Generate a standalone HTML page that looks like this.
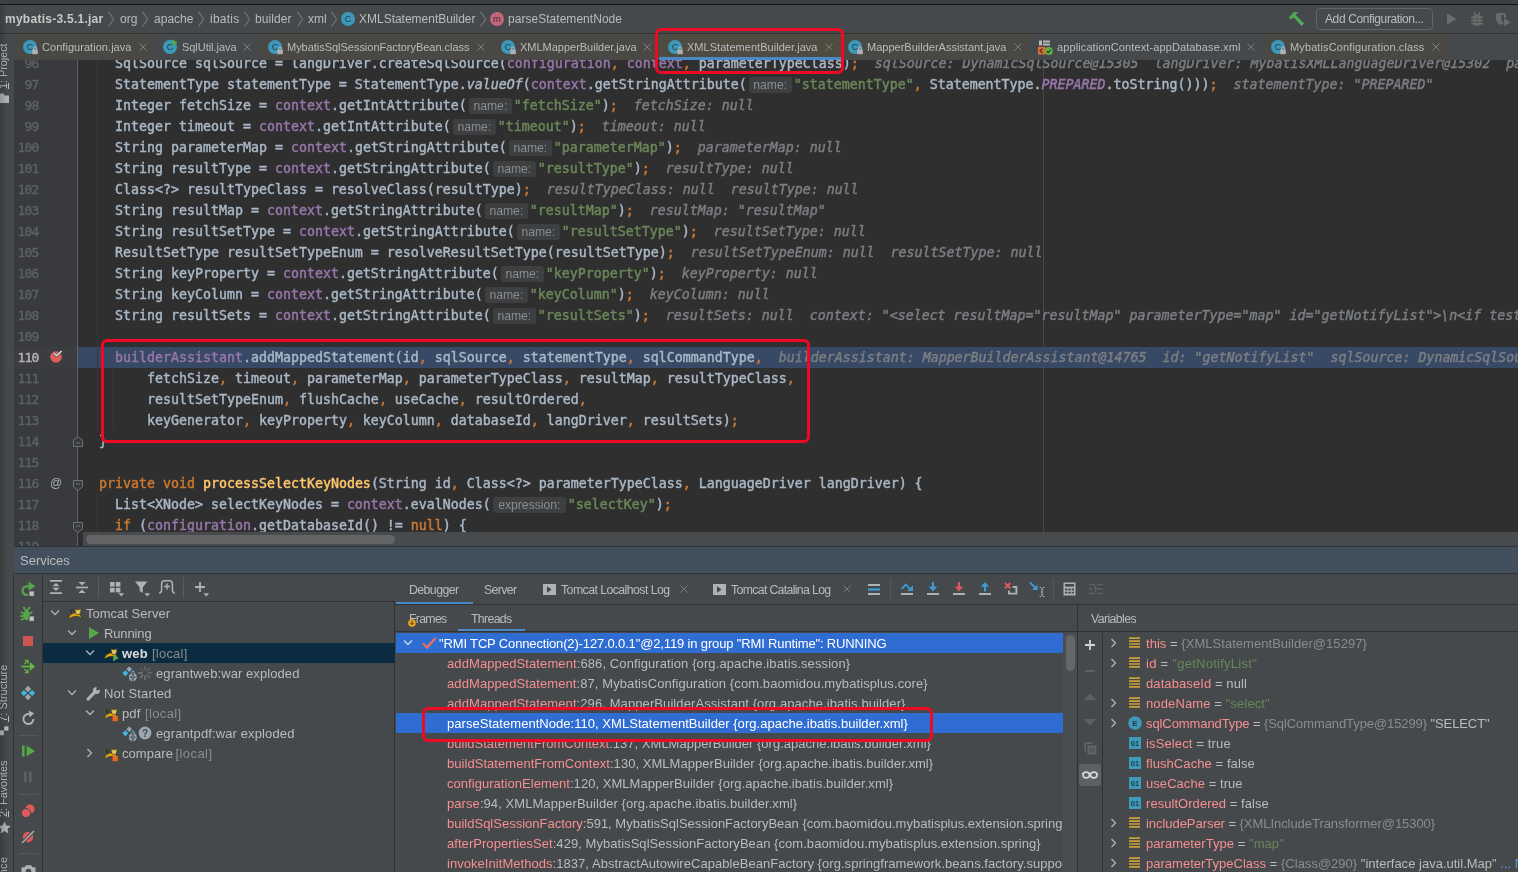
<!DOCTYPE html>
<html><head><meta charset="utf-8"><title>IDE</title>
<style>*{box-sizing:border-box;margin:0;padding:0}
html,body{width:1518px;height:872px;overflow:hidden;background:#45494b}
body{position:relative;will-change:transform;font-family:"Liberation Sans",sans-serif;font-size:12.5px;color:#bbbbbb}
.abs{position:absolute}
svg{position:absolute;overflow:visible}
#topstrip{left:0;top:0;width:1518px;height:5px;background:#3e3f40;border-bottom:1px solid #141414}
#nav{left:0;top:5px;width:1518px;height:29px;background:#45494b;border-bottom:1px solid #323232}
#nav span{position:absolute;top:0;line-height:29px;white-space:nowrap;font-size:12px;color:#bbbbbb}
#nav .btn{position:absolute;left:1316px;top:3px;width:117px;height:22px;border:1px solid #646464;border-radius:4px}
#tabs{left:14px;top:34px;width:1504px;height:26px;background:#45494b}
.tab{position:absolute;top:0;height:26px;line-height:27px;font-size:11px;white-space:nowrap;color:#bbbbbb}
.tab span{position:absolute;top:0}
.tab .x{color:#747474;font-size:15px;line-height:25px;font-family:"DejaVu Sans",sans-serif}
#lstrip{left:0;top:34px;width:14px;height:838px;background:#45494b}
.vt{position:absolute;left:-4px;white-space:nowrap;font-size:11px;color:#bbbbbb;transform-origin:0 0;transform:rotate(-90deg);line-height:14px;height:14px}
#editor{left:14px;top:60px;width:1504px;height:487px;background:#2f2f2f;overflow:hidden}
#gutter{left:14px;top:60px;width:64px;height:487px;background:#383a3e;border-right:1px solid #5f6163;overflow:hidden}
.num{position:absolute;left:0;width:24.7px;text-align:right;font-family:"DejaVu Sans Mono","Liberation Mono",monospace;font-size:13px;letter-spacing:-0.75px;-webkit-text-stroke:0.3px;line-height:21px;height:21px;color:#606366;white-space:pre}
.ln{position:absolute;left:69px;height:21px;line-height:21px;font-family:"DejaVu Sans Mono","Liberation Mono",monospace;font-size:13.29px;color:#a9b7c6;white-space:pre;-webkit-text-stroke:0.45px}
.k{color:#cc7832}.f{color:#9876aa}.s{color:#6a8759}.m{color:#ffc66d}.i{font-style:italic}
.d{color:#7b7e82;font-style:italic}
.h{display:inline-block;vertical-align:top;height:21px;position:relative}
.h b{position:absolute;left:2px;right:2px;top:3px;height:16px;-webkit-text-stroke:0;border-radius:3px;background:#3d3f41;color:#8a8d90;font:normal 12.2px/16px "Liberation Sans",sans-serif;text-align:center}
#hscroll{left:83px;top:532px;width:1435px;height:15px;background:#484b4d}
#hscroll i{position:absolute;left:3px;top:3px;width:309px;height:9px;border-radius:5px;background:#626465}
#svchead{left:14px;top:546px;width:1504px;height:28px;background:#42505e;border-top:1px solid #323232;border-bottom:1px solid #323232;line-height:27px;font-size:13px;color:#bbbbbb;padding-left:6px}
#svcleft{left:14px;top:574px;width:29px;height:298px;background:#45494b;border-right:1px solid #323232}
#svctb{left:43px;top:574px;width:352px;height:28px;border-bottom:1px solid #323232}
#tree{left:43px;top:602px;width:352px;height:270px;background:#45494b;border-right:1px solid #323232}
.tr{position:absolute;left:0;width:351px;height:20px;line-height:20px;font-size:13px;color:#bbbbbb;white-space:nowrap}
.tr span{position:absolute;top:0}
.g{color:#8c8c8c}
#dbg{left:395px;top:574px;width:1123px;height:298px;background:#45494b}
.dt{position:absolute;white-space:nowrap;font-size:12.3px;color:#bbbbbb;line-height:16px}
.row{position:absolute;left:0;height:20px;line-height:20px;font-size:13px;white-space:nowrap;color:#bbbbbb}
.row span{position:absolute;top:0}
.r{color:#ff6b68}
.fr{color:#f78f90}
.red{border:3px solid #ee0a24;border-radius:6px;position:absolute}

#edge{left:0;top:5px;width:7px;height:867px;background:linear-gradient(to right,rgba(0,0,0,.16),rgba(0,0,0,0))}
</style></head>
<body>
<div id="topstrip" class="abs"></div>
<div id="nav" class="abs">
<span style="left:5px;letter-spacing:0.261px;font-weight:bold;color:#c8c8c8;">mybatis-3.5.1.jar</span>
<span style="left:120px;letter-spacing:0.052px;">org</span>
<span style="left:154px;letter-spacing:0.021px;">apache</span>
<span style="left:210px;letter-spacing:0.247px;">ibatis</span>
<span style="left:255px;letter-spacing:0.067px;">builder</span>
<span style="left:308px;letter-spacing:-0.057px;">xml</span>
<span style="left:359px;letter-spacing:-0.012px;">XMLStatementBuilder</span>
<span style="left:508px;letter-spacing:0.033px;">parseStatementNode</span>
<span style="left:1325px;letter-spacing:-0.379px;">Add Configuration...</span>
<div class="btn"></div>
</div>
<svg style="left:107px;top:10px" width="8" height="18" viewBox="0 0 8 18"><path d="M1.4 1.6 L6.6 9.2 L1.4 16.8" fill="none" stroke="#74777a" stroke-width="1.1"/></svg>
<svg style="left:141px;top:10px" width="8" height="18" viewBox="0 0 8 18"><path d="M1.4 1.6 L6.6 9.2 L1.4 16.8" fill="none" stroke="#74777a" stroke-width="1.1"/></svg>
<svg style="left:197px;top:10px" width="8" height="18" viewBox="0 0 8 18"><path d="M1.4 1.6 L6.6 9.2 L1.4 16.8" fill="none" stroke="#74777a" stroke-width="1.1"/></svg>
<svg style="left:243px;top:10px" width="8" height="18" viewBox="0 0 8 18"><path d="M1.4 1.6 L6.6 9.2 L1.4 16.8" fill="none" stroke="#74777a" stroke-width="1.1"/></svg>
<svg style="left:296px;top:10px" width="8" height="18" viewBox="0 0 8 18"><path d="M1.4 1.6 L6.6 9.2 L1.4 16.8" fill="none" stroke="#74777a" stroke-width="1.1"/></svg>
<svg style="left:330px;top:10px" width="8" height="18" viewBox="0 0 8 18"><path d="M1.4 1.6 L6.6 9.2 L1.4 16.8" fill="none" stroke="#74777a" stroke-width="1.1"/></svg>
<svg style="left:479px;top:10px" width="8" height="18" viewBox="0 0 8 18"><path d="M1.4 1.6 L6.6 9.2 L1.4 16.8" fill="none" stroke="#74777a" stroke-width="1.1"/></svg>
<svg style="left:340px;top:11px" width="18" height="18" viewBox="0 0 18 18"><circle cx="8" cy="8" r="7" fill="#3e98b9"/><text x="7.9" y="11" text-anchor="middle" font-family="Liberation Sans,sans-serif" font-size="9" fill="#1f3944">C</text></svg>
<svg style="left:489px;top:11px" width="16" height="16" viewBox="0 0 16 16"><circle cx="8" cy="8" r="7" fill="#c4667a"/><text x="8" y="10.8" text-anchor="middle" font-family="Liberation Sans,sans-serif" font-size="9.5" fill="#3e2a30">m</text></svg>
<svg style="left:1288px;top:11px" width="18" height="17" viewBox="0 0 18 17"><path d="M0.8 6.4 L6.1 0.9 L10.3 1 L7.6 4 L16.1 12.6 L13.5 15 L5.6 6.2 L3.2 8.6 Z" fill="#50a85a"/></svg>
<svg style="left:1446px;top:12px" width="12" height="14" viewBox="0 0 12 14"><path d="M1 1.2 L10.6 7 L1 12.8 Z" fill="#6b6b6b"/></svg>
<svg style="left:1469px;top:11px" width="16" height="16" viewBox="0 0 16 16"><path d="M4.4 6 Q4.4 3.4 8 3.4 Q11.6 3.4 11.6 6 V11 Q11.6 15 8 15 Q4.4 15 4.4 11 Z" fill="#6b6b6b"/><path d="M2 6.2 H14 M2 9.5 H14 M2 12.8 H14" stroke="#6b6b6b" stroke-width="1.5"/><path d="M6.6 4.2 L4.8 1.2 M9.4 4.2 L11.2 1.2" stroke="#6b6b6b" stroke-width="1.4"/><path d="M6.4 7.9 H9.6 M6.4 11.2 H9.6" stroke="#45494b" stroke-width="1.2"/></svg>
<svg style="left:1495px;top:11px" width="18" height="17" viewBox="0 0 18 17"><path d="M1 2.8 L6 1.8 L11 2.8 V8 Q11 11.6 6 14 Q1 11.6 1 8 Z" fill="#6b6b6b"/><path d="M6.3 4 H9 V10.4 H6.3 Z" fill="#45494b"/><path d="M8.6 6.6 L16.2 11.4 L8.6 16.2 Z" fill="#6b6b6b" stroke="#45494b" stroke-width="0.9"/></svg>
<div id="tabs" class="abs">
<div class="tab" style="left:0px;width:141px;background:#4a4845"><span style="left:28px;letter-spacing:0.046px">Configuration.java</span></div>
<div class="tab" style="left:141px;width:104px;background:#45494b"><span style="left:27px;letter-spacing:-0.044px">SqlUtil.java</span></div>
<div class="tab" style="left:245px;width:234px;background:#4a4845"><span style="left:28px;letter-spacing:-0.027px">MybatisSqlSessionFactoryBean.class</span></div>
<div class="tab" style="left:479px;width:166px;background:#4a4845"><span style="left:27px;letter-spacing:-0.014px">XMLMapperBuilder.java</span></div>
<div class="tab" style="left:645px;width:182px;background:#4e4b41"><span style="left:28px;letter-spacing:0.036px">XMLStatementBuilder.java</span></div>
<div class="tab" style="left:827px;width:189px;background:#4a4845"><span style="left:26px;letter-spacing:0.003px">MapperBuilderAssistant.java</span></div>
<div class="tab" style="left:1016px;width:232px;background:#45494b"><span style="left:27px;letter-spacing:0.109px">applicationContext-appDatabase.xml</span></div>
<div class="tab" style="left:1248px;width:185px;background:#4a4845"><span style="left:28px;letter-spacing:0.117px">MybatisConfiguration.class</span></div>
<div class="abs" style="left:645px;top:23px;width:182px;height:3px;background:#4a88c7"></div>
</div>
<div class="abs" style="left:0;top:60px;width:1518px;height:0;border-top:0 solid #323232"></div>
<svg style="left:139px;top:43px" width="8" height="8" viewBox="0 0 8 8"><path d="M0.4 0.4 L7.6 7.6 M7.6 0.4 L0.4 7.6" stroke="#7a7d7f" stroke-width="1" fill="none"/></svg>
<svg style="left:243px;top:43px" width="8" height="8" viewBox="0 0 8 8"><path d="M0.4 0.4 L7.6 7.6 M7.6 0.4 L0.4 7.6" stroke="#7a7d7f" stroke-width="1" fill="none"/></svg>
<svg style="left:477px;top:43px" width="8" height="8" viewBox="0 0 8 8"><path d="M0.4 0.4 L7.6 7.6 M7.6 0.4 L0.4 7.6" stroke="#7a7d7f" stroke-width="1" fill="none"/></svg>
<svg style="left:643px;top:43px" width="8" height="8" viewBox="0 0 8 8"><path d="M0.4 0.4 L7.6 7.6 M7.6 0.4 L0.4 7.6" stroke="#7a7d7f" stroke-width="1" fill="none"/></svg>
<svg style="left:825px;top:43px" width="8" height="8" viewBox="0 0 8 8"><path d="M0.4 0.4 L7.6 7.6 M7.6 0.4 L0.4 7.6" stroke="#7a7d7f" stroke-width="1" fill="none"/></svg>
<svg style="left:1014px;top:43px" width="8" height="8" viewBox="0 0 8 8"><path d="M0.4 0.4 L7.6 7.6 M7.6 0.4 L0.4 7.6" stroke="#7a7d7f" stroke-width="1" fill="none"/></svg>
<svg style="left:1247px;top:43px" width="8" height="8" viewBox="0 0 8 8"><path d="M0.4 0.4 L7.6 7.6 M7.6 0.4 L0.4 7.6" stroke="#7a7d7f" stroke-width="1" fill="none"/></svg>
<svg style="left:1432px;top:43px" width="8" height="8" viewBox="0 0 8 8"><path d="M0.4 0.4 L7.6 7.6 M7.6 0.4 L0.4 7.6" stroke="#7a7d7f" stroke-width="1" fill="none"/></svg>
<svg style="left:22px;top:39px" width="18" height="18" viewBox="0 0 18 18"><circle cx="8" cy="8" r="7" fill="#3e98b9"/><text x="7.9" y="11" text-anchor="middle" font-family="Liberation Sans,sans-serif" font-size="9" fill="#1f3944">C</text><rect x="10.2" y="10.6" width="5.6" height="4.6" fill="#aeb0b2"/><path d="M11.4 10.8 V9.6 A1.6 1.6 0 0 1 14.6 9.6 V10.8" fill="none" stroke="#aeb0b2" stroke-width="1.1"/></svg>
<svg style="left:162px;top:39px" width="18" height="18" viewBox="0 0 18 18"><circle cx="8" cy="8" r="7" fill="#3e98b9"/><text x="7.9" y="11" text-anchor="middle" font-family="Liberation Sans,sans-serif" font-size="9" fill="#1f3944">C</text><path d="M10.2 0.2 L15.8 3.6 L10.2 7 Z" fill="#57a64a"/></svg>
<svg style="left:267px;top:39px" width="18" height="18" viewBox="0 0 18 18"><circle cx="8" cy="8" r="7" fill="#3e98b9"/><text x="7.9" y="11" text-anchor="middle" font-family="Liberation Sans,sans-serif" font-size="9" fill="#1f3944">C</text><rect x="10.2" y="10.6" width="5.6" height="4.6" fill="#aeb0b2"/><path d="M11.4 10.8 V9.6 A1.6 1.6 0 0 1 14.6 9.6 V10.8" fill="none" stroke="#aeb0b2" stroke-width="1.1"/></svg>
<svg style="left:500px;top:39px" width="18" height="18" viewBox="0 0 18 18"><circle cx="8" cy="8" r="7" fill="#3e98b9"/><text x="7.9" y="11" text-anchor="middle" font-family="Liberation Sans,sans-serif" font-size="9" fill="#1f3944">C</text><rect x="10.2" y="10.6" width="5.6" height="4.6" fill="#aeb0b2"/><path d="M11.4 10.8 V9.6 A1.6 1.6 0 0 1 14.6 9.6 V10.8" fill="none" stroke="#aeb0b2" stroke-width="1.1"/></svg>
<svg style="left:667px;top:39px" width="18" height="18" viewBox="0 0 18 18"><circle cx="8" cy="8" r="7" fill="#3e98b9"/><text x="7.9" y="11" text-anchor="middle" font-family="Liberation Sans,sans-serif" font-size="9" fill="#1f3944">C</text><rect x="10.2" y="10.6" width="5.6" height="4.6" fill="#aeb0b2"/><path d="M11.4 10.8 V9.6 A1.6 1.6 0 0 1 14.6 9.6 V10.8" fill="none" stroke="#aeb0b2" stroke-width="1.1"/></svg>
<svg style="left:847px;top:39px" width="18" height="18" viewBox="0 0 18 18"><circle cx="8" cy="8" r="7" fill="#3e98b9"/><text x="7.9" y="11" text-anchor="middle" font-family="Liberation Sans,sans-serif" font-size="9" fill="#1f3944">C</text><rect x="10.2" y="10.6" width="5.6" height="4.6" fill="#aeb0b2"/><path d="M11.4 10.8 V9.6 A1.6 1.6 0 0 1 14.6 9.6 V10.8" fill="none" stroke="#aeb0b2" stroke-width="1.1"/></svg>
<svg style="left:1037px;top:39px" width="17" height="17" viewBox="0 0 17 17"><rect x="2" y="1.5" width="3" height="5" fill="#b8b8b8"/><rect x="6" y="1.5" width="7" height="2" fill="#b8b8b8"/><rect x="6" y="4.5" width="7" height="2" fill="#b8b8b8"/><rect x="1" y="8" width="7.5" height="7.5" fill="#e0703a"/><path d="M5.5 9.5 L3 11.8 L5.5 14" stroke="#5a2a12" stroke-width="1.2" fill="none"/><circle cx="11.8" cy="12" r="4" fill="#5fae48"/><path d="M9.8 12.2 L11.3 13.6 L13.8 10.6" stroke="#24471a" stroke-width="1.2" fill="none"/></svg>
<svg style="left:1270px;top:39px" width="18" height="18" viewBox="0 0 18 18"><circle cx="8" cy="8" r="7" fill="#3e98b9"/><text x="7.9" y="11" text-anchor="middle" font-family="Liberation Sans,sans-serif" font-size="9" fill="#1f3944">C</text><rect x="10.2" y="10.6" width="5.6" height="4.6" fill="#aeb0b2"/><path d="M11.4 10.8 V9.6 A1.6 1.6 0 0 1 14.6 9.6 V10.8" fill="none" stroke="#aeb0b2" stroke-width="1.1"/></svg>
<div id="lstrip" class="abs">
<div class="vt" style="top:54.5px;letter-spacing:-0.097px"><u>1</u>: Project</div>
<div class="vt" style="top:687.5px;letter-spacing:0.053px"><u>7</u>: Structure</div>
<div class="vt" style="top:783px;letter-spacing:-0.081px"><u>2</u>: Favorites</div>
<div class="vt" style="top:885px;letter-spacing:0.456px">Persistence</div>
</div>
<svg style="left:0px;top:93px" width="10" height="11" viewBox="0 0 10 11"><path d="M0 0.5 H3.4 L4.6 2.5 H9 V10 H0 Z" fill="#afb1b3"/></svg>
<svg style="left:-1px;top:726px" width="10" height="10" viewBox="0 0 10 10"><rect x="0" y="4.4" width="4.8" height="4.8" fill="#b8babc"/><rect x="5.2" y="0.4" width="4.2" height="4.2" fill="#b8babc"/></svg>
<svg style="left:-2.5px;top:820.5px" width="13" height="13" viewBox="0 0 13 13"><path d="M6.5 0.5 L8.3 4.6 L12.7 5 L9.4 8 L10.4 12.4 L6.5 10.1 L2.6 12.4 L3.6 8 L0.3 5 L4.7 4.6 Z" fill="#afb1b3"/></svg>
<div id="editor" class="abs">
<div class="abs" style="left:64px;top:287px;width:1440px;height:21px;background:#374964"></div>
<div class="abs" style="left:1029px;top:0;width:1px;height:472px;background:#484848"></div>
<div class="abs" style="left:83px;top:0;width:1px;height:371px;background:#393939"></div>
<div class="abs" style="left:99px;top:308px;width:1px;height:63px;background:#393939"></div>
<div class="abs" style="left:83px;top:434px;width:1px;height:80px;background:#393939"></div>
<div class="ln" style="top:-7px">    SqlSource sqlSource = langDriver.createSqlSource(<span class="f">configuration</span><span class="k">,</span> <span class="f">context</span><span class="k">,</span> parameterTypeClass)<span class="k">;</span><span class="d">  sqlSource: DynamicSqlSource@15305  langDriver: MybatisXMLLanguageDriver@15302  parameterTypeClass: null</span></div>
<div class="ln" style="top:14px">    StatementType statementType = StatementType.<span class="i">valueOf</span>(<span class="f">context</span>.getStringAttribute(<span class="h" style="width:47px"><b>name:</b></span><span class="s">"statementType"</span><span class="k">,</span> StatementType.<span class="f i">PREPARED</span>.toString()))<span class="k">;</span><span class="d">  statementType: "PREPARED"</span></div>
<div class="ln" style="top:35px">    Integer fetchSize = <span class="f">context</span>.getIntAttribute(<span class="h" style="width:47px"><b>name:</b></span><span class="s">"fetchSize"</span>)<span class="k">;</span><span class="d">  fetchSize: null</span></div>
<div class="ln" style="top:56px">    Integer timeout = <span class="f">context</span>.getIntAttribute(<span class="h" style="width:47px"><b>name:</b></span><span class="s">"timeout"</span>)<span class="k">;</span><span class="d">  timeout: null</span></div>
<div class="ln" style="top:77px">    String parameterMap = <span class="f">context</span>.getStringAttribute(<span class="h" style="width:47px"><b>name:</b></span><span class="s">"parameterMap"</span>)<span class="k">;</span><span class="d">  parameterMap: null</span></div>
<div class="ln" style="top:98px">    String resultType = <span class="f">context</span>.getStringAttribute(<span class="h" style="width:47px"><b>name:</b></span><span class="s">"resultType"</span>)<span class="k">;</span><span class="d">  resultType: null</span></div>
<div class="ln" style="top:119px">    Class&lt;?&gt; resultTypeClass = resolveClass(resultType)<span class="k">;</span><span class="d">  resultTypeClass: null  resultType: null</span></div>
<div class="ln" style="top:140px">    String resultMap = <span class="f">context</span>.getStringAttribute(<span class="h" style="width:47px"><b>name:</b></span><span class="s">"resultMap"</span>)<span class="k">;</span><span class="d">  resultMap: "resultMap"</span></div>
<div class="ln" style="top:161px">    String resultSetType = <span class="f">context</span>.getStringAttribute(<span class="h" style="width:47px"><b>name:</b></span><span class="s">"resultSetType"</span>)<span class="k">;</span><span class="d">  resultSetType: null</span></div>
<div class="ln" style="top:182px">    ResultSetType resultSetTypeEnum = resolveResultSetType(resultSetType)<span class="k">;</span><span class="d">  resultSetTypeEnum: null  resultSetType: null</span></div>
<div class="ln" style="top:203px">    String keyProperty = <span class="f">context</span>.getStringAttribute(<span class="h" style="width:47px"><b>name:</b></span><span class="s">"keyProperty"</span>)<span class="k">;</span><span class="d">  keyProperty: null</span></div>
<div class="ln" style="top:224px">    String keyColumn = <span class="f">context</span>.getStringAttribute(<span class="h" style="width:47px"><b>name:</b></span><span class="s">"keyColumn"</span>)<span class="k">;</span><span class="d">  keyColumn: null</span></div>
<div class="ln" style="top:245px">    String resultSets = <span class="f">context</span>.getStringAttribute(<span class="h" style="width:47px"><b>name:</b></span><span class="s">"resultSets"</span>)<span class="k">;</span><span class="d">  resultSets: null  context: "&lt;select resultMap="resultMap" parameterType="map" id="getNotifyList"&gt;\n&lt;if test="paramMap.psnCode != null"&gt;</span></div>
<div class="ln" style="top:287px">    <span class="f">builderAssistant</span>.addMappedStatement(id<span class="k">,</span> sqlSource<span class="k">,</span> statementType<span class="k">,</span> sqlCommandType<span class="k">,</span><span class="d">  builderAssistant: MapperBuilderAssistant@14765  id: "getNotifyList"  sqlSource: DynamicSqlSource@15305  statementType</span></div>
<div class="ln" style="top:308px">        fetchSize<span class="k">,</span> timeout<span class="k">,</span> parameterMap<span class="k">,</span> parameterTypeClass<span class="k">,</span> resultMap<span class="k">,</span> resultTypeClass<span class="k">,</span></div>
<div class="ln" style="top:329px">        resultSetTypeEnum<span class="k">,</span> flushCache<span class="k">,</span> useCache<span class="k">,</span> resultOrdered<span class="k">,</span></div>
<div class="ln" style="top:350px">        keyGenerator<span class="k">,</span> keyProperty<span class="k">,</span> keyColumn<span class="k">,</span> databaseId<span class="k">,</span> langDriver<span class="k">,</span> resultSets)<span class="k">;</span></div>
<div class="ln" style="top:371px">  }</div>
<div class="ln" style="top:413px">  <span class="k">private void </span><span class="m">processSelectKeyNodes</span>(String id<span class="k">,</span> Class&lt;?&gt; parameterTypeClass<span class="k">,</span> LanguageDriver langDriver) {</div>
<div class="ln" style="top:434px">    List&lt;XNode&gt; selectKeyNodes = <span class="f">context</span>.evalNodes(<span class="h" style="width:77px"><b>expression:</b></span><span class="s">"selectKey"</span>)<span class="k">;</span></div>
<div class="ln" style="top:455px">    <span class="k">if </span>(<span class="f">configuration</span>.getDatabaseId() != <span class="k">null</span>) {</div>
</div>
<div id="gutter" class="abs">
<div class="abs" style="left:0;top:287px;width:64px;height:21px;background:#3b3d41"></div>
<div class="num" style="top:-7px">96</div>
<div class="num" style="top:14px">97</div>
<div class="num" style="top:35px">98</div>
<div class="num" style="top:56px">99</div>
<div class="num" style="top:77px">100</div>
<div class="num" style="top:98px">101</div>
<div class="num" style="top:119px">102</div>
<div class="num" style="top:140px">103</div>
<div class="num" style="top:161px">104</div>
<div class="num" style="top:182px">105</div>
<div class="num" style="top:203px">106</div>
<div class="num" style="top:224px">107</div>
<div class="num" style="top:245px">108</div>
<div class="num" style="top:266px">109</div>
<div class="num" style="top:287px;color:#b0b0b0;-webkit-text-stroke:0.5px">110</div>
<div class="num" style="top:308px">111</div>
<div class="num" style="top:329px">112</div>
<div class="num" style="top:350px">113</div>
<div class="num" style="top:371px">114</div>
<div class="num" style="top:392px">115</div>
<div class="num" style="top:413px">116</div>
<div class="num" style="top:434px">117</div>
<div class="num" style="top:455px">118</div>
<div class="num" style="top:476px">119</div>
</div>
<svg style="left:49px;top:348px" width="16" height="16" viewBox="0 0 16 16"><circle cx="7" cy="9" r="5.8" fill="#db5f5a"/><path d="M5 5.2 L7.6 7.6 L12.6 3" fill="none" stroke="#4a4a4a" stroke-width="2.6"/><path d="M5 5.2 L7.6 7.6 L12.6 3" fill="none" stroke="#e4e4e4" stroke-width="1.4"/></svg>
<div class="abs" style="left:49px;top:473px;width:14px;height:21px;line-height:20px;font-size:12px;color:#afb1b3;text-align:center">@</div>
<svg style="left:72.5px;top:436px" width="10" height="12" viewBox="0 0 10 12"><path d="M0.5 10.5 V4.2 L5 0.6 L9.5 4.2 V10.5 Z" fill="#383a3e" stroke="#707375" stroke-width="1"/><path d="M3 7 H7" stroke="#707375" stroke-width="1"/></svg>
<svg style="left:72.5px;top:480px" width="10" height="12" viewBox="0 0 10 12"><path d="M0.5 0.5 V6.8 L5 10.4 L9.5 6.8 V0.5 Z" fill="#383a3e" stroke="#707375" stroke-width="1"/><path d="M3 4 H7" stroke="#707375" stroke-width="1"/></svg>
<svg style="left:72.5px;top:522px" width="10" height="12" viewBox="0 0 10 12"><path d="M0.5 0.5 V6.8 L5 10.4 L9.5 6.8 V0.5 Z" fill="#383a3e" stroke="#707375" stroke-width="1"/><path d="M3 4 H7" stroke="#707375" stroke-width="1"/></svg>
<div id="hscroll" class="abs"><i></i></div>
<div id="svchead" class="abs">Services</div>
<div id="svcleft" class="abs"></div>
<div id="svctb" class="abs"></div>
<div id="tree" class="abs">
<div class="abs" style="left:0;top:41px;width:352px;height:20px;background:#0b2b42"></div>
<div class="tr" style="top:2px"><span style="left:43px;letter-spacing:0.014px">Tomcat Server</span></div>
<div class="tr" style="top:22px"><span style="left:61px;letter-spacing:-0.134px">Running</span></div>
<div class="tr" style="top:42px"><span style="left:79px;letter-spacing:0.234px"><b style="color:#dcdcdc">web</b></span><span class="g" style="left:109px;letter-spacing:0.219px">[local]</span></div>
<div class="tr" style="top:62px"><span style="left:113px;letter-spacing:0.084px">egrantweb:war exploded</span></div>
<div class="tr" style="top:82px"><span style="left:61px;letter-spacing:0.158px">Not Started</span></div>
<div class="tr" style="top:102px"><span style="left:79px;letter-spacing:0.141px">pdf</span><span class="g" style="left:102px;letter-spacing:0.362px">[local]</span></div>
<div class="tr" style="top:122px"><span style="left:113px;letter-spacing:0.119px">egrantpdf:war exploded</span></div>
<div class="tr" style="top:142px"><span style="left:79px;letter-spacing:0.06px">compare</span><span class="g" style="left:132.5px;letter-spacing:0.433px">[local]</span></div>
</div>
<svg style="left:50px;top:609px" width="10" height="8" viewBox="0 0 10 8"><path d="M1 1.5 L5 5.5 L9 1.5" fill="none" stroke="#afb1b3" stroke-width="1.3"/></svg>
<svg style="left:67px;top:629px" width="10" height="8" viewBox="0 0 10 8"><path d="M1 1.5 L5 5.5 L9 1.5" fill="none" stroke="#afb1b3" stroke-width="1.3"/></svg>
<svg style="left:85px;top:649px" width="10" height="8" viewBox="0 0 10 8"><path d="M1 1.5 L5 5.5 L9 1.5" fill="none" stroke="#afb1b3" stroke-width="1.3"/></svg>
<svg style="left:67px;top:689px" width="10" height="8" viewBox="0 0 10 8"><path d="M1 1.5 L5 5.5 L9 1.5" fill="none" stroke="#afb1b3" stroke-width="1.3"/></svg>
<svg style="left:85px;top:709px" width="10" height="8" viewBox="0 0 10 8"><path d="M1 1.5 L5 5.5 L9 1.5" fill="none" stroke="#afb1b3" stroke-width="1.3"/></svg>
<svg style="left:86px;top:748px" width="8" height="10" viewBox="0 0 8 10"><path d="M1.5 1 L5.5 5 L1.5 9" fill="none" stroke="#afb1b3" stroke-width="1.3"/></svg>
<svg style="left:68px;top:607.5px" width="16" height="14" viewBox="0 0 16 14"><path d="M4.6 6.2 Q1.6 4.6 2.6 2.6 Q3.4 1.4 5 2.2" fill="none" stroke="#1c1c1c" stroke-width="0.9"/><path d="M0.3 10 Q2.2 5.6 6.4 5 L10.4 5.6 Q12.6 7.4 13.8 9.8 L12.2 9.6 Q10.6 8 9 8.2 Q5 8 3 9.6 Q1.4 10.4 0.3 10 Z" fill="#e6a817" stroke="#2a2410" stroke-width="0.5"/><path d="M7.4 0.4 L8.8 1.6 H11 L12.6 0.3 L12.9 3.4 L11.8 6.4 H8.4 L7.2 3.6 Z" fill="#e6b93a" stroke="#2a2410" stroke-width="0.5"/><path d="M8.8 3 L11.4 3 L10.9 5.6 H9.3 Z" fill="#d8c79a"/></svg>
<svg style="left:88px;top:626px" width="12" height="14" viewBox="0 0 12 14"><path d="M1 1 L11 7 L1 13 Z" fill="#57a64a"/></svg>
<svg style="left:104px;top:647.5px" width="16" height="14" viewBox="0 0 16 14"><path d="M4.6 6.2 Q1.6 4.6 2.6 2.6 Q3.4 1.4 5 2.2" fill="none" stroke="#1c1c1c" stroke-width="0.9"/><path d="M0.3 10 Q2.2 5.6 6.4 5 L10.4 5.6 Q12.6 7.4 13.8 9.8 L12.2 9.6 Q10.6 8 9 8.2 Q5 8 3 9.6 Q1.4 10.4 0.3 10 Z" fill="#e6a817" stroke="#2a2410" stroke-width="0.5"/><path d="M7.4 0.4 L8.8 1.6 H11 L12.6 0.3 L12.9 3.4 L11.8 6.4 H8.4 L7.2 3.6 Z" fill="#e6b93a" stroke="#2a2410" stroke-width="0.5"/><path d="M8.8 3 L11.4 3 L10.9 5.6 H9.3 Z" fill="#d8c79a"/><path d="M9.2 6.6 L14.8 10 L9.2 13.4 Z" fill="#57a64a"/></svg>
<svg style="left:104px;top:707.5px" width="16" height="14" viewBox="0 0 16 14"><path d="M4.6 6.2 Q1.6 4.6 2.6 2.6 Q3.4 1.4 5 2.2" fill="none" stroke="#1c1c1c" stroke-width="0.9"/><path d="M0.3 10 Q2.2 5.6 6.4 5 L10.4 5.6 Q12.6 7.4 13.8 9.8 L12.2 9.6 Q10.6 8 9 8.2 Q5 8 3 9.6 Q1.4 10.4 0.3 10 Z" fill="#e6a817" stroke="#2a2410" stroke-width="0.5"/><path d="M7.4 0.4 L8.8 1.6 H11 L12.6 0.3 L12.9 3.4 L11.8 6.4 H8.4 L7.2 3.6 Z" fill="#e6b93a" stroke="#2a2410" stroke-width="0.5"/><path d="M8.8 3 L11.4 3 L10.9 5.6 H9.3 Z" fill="#d8c79a"/><rect x="8.6" y="8" width="5.2" height="5.2" fill="#f0691f"/></svg>
<svg style="left:104px;top:747.5px" width="16" height="14" viewBox="0 0 16 14"><path d="M4.6 6.2 Q1.6 4.6 2.6 2.6 Q3.4 1.4 5 2.2" fill="none" stroke="#1c1c1c" stroke-width="0.9"/><path d="M0.3 10 Q2.2 5.6 6.4 5 L10.4 5.6 Q12.6 7.4 13.8 9.8 L12.2 9.6 Q10.6 8 9 8.2 Q5 8 3 9.6 Q1.4 10.4 0.3 10 Z" fill="#e6a817" stroke="#2a2410" stroke-width="0.5"/><path d="M7.4 0.4 L8.8 1.6 H11 L12.6 0.3 L12.9 3.4 L11.8 6.4 H8.4 L7.2 3.6 Z" fill="#e6b93a" stroke="#2a2410" stroke-width="0.5"/><path d="M8.8 3 L11.4 3 L10.9 5.6 H9.3 Z" fill="#d8c79a"/><rect x="8.6" y="8" width="5.2" height="5.2" fill="#f0691f"/></svg>
<svg style="left:86px;top:686px" width="15" height="15" viewBox="0 0 15 15"><path d="M2 13.2 L8.2 6.6" stroke="#afb1b3" stroke-width="3.1" stroke-linecap="round" fill="none"/><path d="M13.8 3.2 A3.6 3.6 0 1 1 10.6 0.9 L10.2 3.4 L11.8 4.8 Z" fill="#afb1b3"/></svg>
<svg style="left:121.5px;top:665.5px" width="16" height="16" viewBox="0 0 16 16"><path d="M7.2 0.4 L10 3.2 L7.2 6 L4.4 3.2 Z" fill="#9aa7b0"/><path d="M3.4 4.2 L6.4 7.2 L3.4 10.2 L0.4 7.2 Z" fill="#40b6e0"/><path d="M11 4.2 L14 7.2 L11 10.2 L8 7.2 Z" fill="#40b6e0"/><circle cx="10.8" cy="11.2" r="4.5" fill="#9aa7b0" stroke="#45494b" stroke-width="1"/><path d="M7 11.2 H14.6 M10.8 7.2 Q8.4 11.2 10.8 15.2 M10.8 7.2 Q13.2 11.2 10.8 15.2" stroke="#3a4046" stroke-width=".7" fill="none"/></svg>
<svg style="left:121.5px;top:725.5px" width="16" height="16" viewBox="0 0 16 16"><path d="M7.2 0.4 L10 3.2 L7.2 6 L4.4 3.2 Z" fill="#9aa7b0"/><path d="M3.4 4.2 L6.4 7.2 L3.4 10.2 L0.4 7.2 Z" fill="#40b6e0"/><path d="M11 4.2 L14 7.2 L11 10.2 L8 7.2 Z" fill="#40b6e0"/><circle cx="10.8" cy="11.2" r="4.5" fill="#9aa7b0" stroke="#45494b" stroke-width="1"/><path d="M7 11.2 H14.6 M10.8 7.2 Q8.4 11.2 10.8 15.2 M10.8 7.2 Q13.2 11.2 10.8 15.2" stroke="#3a4046" stroke-width=".7" fill="none"/></svg>
<svg style="left:138px;top:666px" width="14" height="14" viewBox="0 0 14 14"><path d="M10.00 7.00 L13.30 7.00" stroke="#9aa0a4" stroke-opacity="0.43" stroke-width="1.4" stroke-linecap="round"/><path d="M9.12 9.12 L11.45 11.45" stroke="#9aa0a4" stroke-opacity="0.49" stroke-width="1.4" stroke-linecap="round"/><path d="M7.00 10.00 L7.00 13.30" stroke="#9aa0a4" stroke-opacity="0.55" stroke-width="1.4" stroke-linecap="round"/><path d="M4.88 9.12 L2.55 11.45" stroke="#9aa0a4" stroke-opacity="0.61" stroke-width="1.4" stroke-linecap="round"/><path d="M4.00 7.00 L0.70 7.00" stroke="#9aa0a4" stroke-opacity="0.67" stroke-width="1.4" stroke-linecap="round"/><path d="M4.88 4.88 L2.55 2.55" stroke="#9aa0a4" stroke-opacity="0.25" stroke-width="1.4" stroke-linecap="round"/><path d="M7.00 4.00 L7.00 0.70" stroke="#9aa0a4" stroke-opacity="0.31" stroke-width="1.4" stroke-linecap="round"/><path d="M9.12 4.88 L11.45 2.55" stroke="#9aa0a4" stroke-opacity="0.37" stroke-width="1.4" stroke-linecap="round"/></svg>
<svg style="left:138px;top:726px" width="14" height="14" viewBox="0 0 14 14"><circle cx="7" cy="7" r="6.4" fill="#9aa7b0"/><text x="7" y="10.6" text-anchor="middle" font-family="Liberation Sans,sans-serif" font-weight="bold" font-size="10" fill="#45494b">?</text></svg>
<svg style="left:50px;top:580px" width="12" height="14" viewBox="0 0 12 14"><path d="M0 0.9 H12 M0 13.1 H12" stroke="#afb1b3" stroke-width="1.7"/><path d="M6 3 L9.6 6.3 H2.4 Z M6 11 L9.6 7.7 H2.4 Z" fill="#afb1b3"/></svg>
<svg style="left:76px;top:581px" width="12" height="13" viewBox="0 0 12 13"><path d="M0 6.5 H12" stroke="#afb1b3" stroke-width="1.7"/><path d="M6 4.6 L9.6 1 H2.4 Z M6 8.4 L9.6 12 H2.4 Z" fill="#afb1b3"/></svg>
<div class="abs" style="left:98px;top:577px;width:1px;height:21px;background:#5a5d5f"></div>
<svg style="left:110px;top:582px" width="15" height="15" viewBox="0 0 15 15"><rect x="0" y="0" width="4.6" height="4.6" fill="#afb1b3"/><rect x="5.8" y="0" width="4.6" height="4.6" fill="#afb1b3"/><rect x="0" y="5.8" width="4.6" height="4.6" fill="#afb1b3"/><rect x="5.8" y="5.8" width="4.6" height="4.6" fill="#afb1b3"/><path d="M8.4 11.2 H14.2 L11.3 14.4 Z" fill="#afb1b3"/></svg>
<svg style="left:135px;top:581px" width="16" height="16" viewBox="0 0 16 16"><path d="M0 0.5 H12.4 L7.8 6.2 V12 L4.6 10 V6.2 Z" fill="#afb1b3"/><path d="M9.4 12.2 H15.2 L12.3 15.4 Z" fill="#afb1b3"/></svg>
<svg style="left:159px;top:580px" width="16" height="14" viewBox="0 0 16 14"><path d="M0.2 13.2 Q2.6 12.6 2.6 10 V4 Q2.6 0.8 5.8 0.8 H10.2 Q13.4 0.8 13.4 4 V10 Q13.4 12.6 15.8 13.2" fill="none" stroke="#afb1b3" stroke-width="1.5"/><path d="M5 6.4 H11 M8 3.4 V9.4" stroke="#afb1b3" stroke-width="1.5"/></svg>
<div class="abs" style="left:183px;top:577px;width:1px;height:21px;background:#5a5d5f"></div>
<svg style="left:195px;top:582px" width="15" height="15" viewBox="0 0 15 15"><path d="M0 5 H10 M5 0 V10" stroke="#afb1b3" stroke-width="1.8"/><path d="M8.4 11.2 H14.2 L11.3 14.4 Z" fill="#afb1b3"/></svg>
<svg style="left:20px;top:581px" width="17" height="17" viewBox="0 0 17 17"><path d="M9.5 5.3 H6.8 A4.3 4.3 0 1 0 6.8 13.9 H8.2" fill="none" stroke="#57a64a" stroke-width="2.2"/><path d="M8.6 0.6 L15.4 5.3 L8.6 10 Z" fill="#57a64a"/><rect x="9" y="10" width="5.2" height="5.2" fill="#c0c2c4" stroke="#45494b" stroke-width="0.8"/></svg>
<svg style="left:20px;top:606px" width="17" height="17" viewBox="0 0 17 17"><ellipse cx="6.6" cy="9.4" rx="3.4" ry="4.8" fill="#57a64a"/><path d="M4 4.8 A2.8 2.8 0 0 1 9.2 4.8 Z" fill="#57a64a"/><path d="M0.8 6.2 L4 7.6 M0.4 10 H3.6 M1 14 L4 12.2 M12.4 6.2 L9.2 7.6 M3.4 1 L5 3.4 M9.8 1 L8.2 3.4" stroke="#57a64a" stroke-width="1.9"/><rect x="9" y="10" width="5.2" height="5.2" fill="#c0c2c4" stroke="#45494b" stroke-width="0.8"/></svg>
<div class="abs" style="left:23px;top:636px;width:10px;height:10px;background:#cb5652"></div>
<svg style="left:21px;top:659px" width="15" height="15" viewBox="0 0 15 15"><path d="M0.4 7.5 H11" stroke="#62b543" stroke-width="1.8" fill="none"/><path d="M8.8 3 L14.2 7.5 L8.8 12 Z" fill="#62b543"/><path d="M3.4 5 L6.6 1.8 M3.8 1.4 H7 V4.6 M3.4 10 L6.6 13.2 M3.8 13.6 H7 V10.4" stroke="#62b543" stroke-width="1.3" fill="none"/></svg>
<svg style="left:20px;top:685px" width="16" height="16" viewBox="0 0 16 16"><path d="M8 0.8 L11.2 4 L8 7.2 L4.8 4 Z M8 8.8 L11.2 12 L8 15.2 L4.8 12 Z" fill="#9aa7b0"/><path d="M3.9 4.9 L7.1 8 L3.9 11.1 L0.8 8 Z M12.1 4.9 L15.2 8 L12.1 11.1 L8.9 8 Z" fill="#40b6e0"/></svg>
<svg style="left:21px;top:710px" width="15" height="16" viewBox="0 0 15 16"><path d="M12.4 9 A5 5 0 1 1 8.6 4.1" fill="none" stroke="#afb1b3" stroke-width="2"/><path d="M7.6 0.6 L13.2 3.2 L8.6 7.6 Z" fill="#afb1b3"/></svg>
<div class="abs" style="left:19px;top:735px;width:19px;height:1px;background:#555759"></div>
<svg style="left:21px;top:744px" width="15" height="14" viewBox="0 0 15 14"><rect x="1" y="1.5" width="2.6" height="11" fill="#57a64a"/><path d="M5.6 1.5 L14 7 L5.6 12.5 Z" fill="#57a64a"/></svg>
<svg style="left:23px;top:771px" width="10" height="12" viewBox="0 0 10 12"><rect x="1" y="0.5" width="2.6" height="11" fill="#5e6163"/><rect x="6" y="0.5" width="2.6" height="11" fill="#5e6163"/></svg>
<div class="abs" style="left:19px;top:794px;width:19px;height:1px;background:#555759"></div>
<svg style="left:20px;top:803px" width="16" height="16" viewBox="0 0 16 16"><circle cx="10" cy="6" r="4.6" fill="#dd5a5a"/><circle cx="6" cy="10" r="4.6" fill="#dd5a5a" stroke="#45494b" stroke-width="1"/></svg>
<svg style="left:20px;top:829px" width="16" height="16" viewBox="0 0 16 16"><circle cx="8" cy="8" r="5.2" fill="#dd5a5a"/><path d="M1.5 14.5 L14.5 1.5" stroke="#45494b" stroke-width="3.2"/><path d="M2 14 L14 2" stroke="#afb1b3" stroke-width="1.5"/></svg>
<div class="abs" style="left:19px;top:853px;width:19px;height:1px;background:#555759"></div>
<svg style="left:20.5px;top:864px" width="15" height="13" viewBox="0 0 16 13"><path d="M0.5 3 H4 L5.2 1 H10.8 L12 3 H15.5 V12.5 H0.5 Z" fill="#afb1b3"/><circle cx="8" cy="7.6" r="3" fill="#45494b"/></svg>
<div class="abs" style="left:13px;top:574px;width:1px;height:298px;background:#323232"></div>
<div id="dbg" class="abs">
<div class="dt" style="left:14px;top:8px;letter-spacing:-0.564px">Debugger</div>
<div class="dt" style="left:89px;top:8px;letter-spacing:-0.62px">Server</div>
<div class="dt" style="left:166px;top:8px;letter-spacing:-0.556px">Tomcat Localhost Log</div>
<div class="dt" style="left:336px;top:8px;letter-spacing:-0.664px">Tomcat Catalina Log</div>
<div class="abs" style="left:1px;top:27.5px;width:77px;height:2.5px;background:#4a88c7"></div>
<div class="abs" style="left:0;top:30px;width:1123px;height:1px;background:#323232"></div>
<div class="dt" style="left:14px;top:37px;letter-spacing:-0.698px">Frames</div>
<div class="dt" style="left:76px;top:37px;letter-spacing:-0.661px">Threads</div>
<div class="dt" style="left:696px;top:37px;letter-spacing:-0.595px">Variables</div>
<div class="abs" style="left:63px;top:55px;width:67px;height:2px;background:#4a88c7"></div>
<div class="abs" style="left:0;top:57px;width:1123px;height:1px;background:#323232"></div>
<div class="abs" style="left:682px;top:31px;width:1px;height:267px;background:#323232"></div>
<div class="abs" style="left:707px;top:59px;width:1px;height:239px;background:#323232"></div>
<div class="abs" style="left:1px;top:59px;width:667px;height:239px;overflow:hidden">
<div class="abs" style="left:0;top:0;width:667px;height:20px;background:#2f6dd3"></div>
<div class="abs" style="left:0;top:80px;width:667px;height:20px;background:#2f6dd3"></div>
<div class="row" style="top:1px;color:#ffffff"><span style="left:43px;letter-spacing:-0.147px">"RMI TCP Connection(2)-127.0.0.1"@2,119 in group "RMI Runtime": RUNNING</span></div>
<div class="row" style="top:21px;width:666.5px;overflow:hidden"><span style="left:51px;letter-spacing:0.099px"><i class="fr" style="font-style:normal">addMappedStatement</i>:686, Configuration {org.apache.ibatis.session}</span></div>
<div class="row" style="top:41px;width:666.5px;overflow:hidden"><span style="left:51px;letter-spacing:0.089px"><i class="fr" style="font-style:normal">addMappedStatement</i>:87, MybatisConfiguration {com.baomidou.mybatisplus.core}</span></div>
<div class="row" style="top:61px;width:666.5px;overflow:hidden"><span style="left:51px;letter-spacing:0.092px"><i class="fr" style="font-style:normal">addMappedStatement</i>:296, MapperBuilderAssistant {org.apache.ibatis.builder}</span></div>
<div class="row" style="top:81px;color:#ffffff"><span style="left:51px;letter-spacing:0.04px">parseStatementNode:110, XMLStatementBuilder {org.apache.ibatis.builder.xml}</span></div>
<div class="row" style="top:101px;width:666.5px;overflow:hidden"><span style="left:51px;letter-spacing:0.015px"><i class="fr" style="font-style:normal">buildStatementFromContext</i>:137, XMLMapperBuilder {org.apache.ibatis.builder.xml}</span></div>
<div class="row" style="top:121px;width:666.5px;overflow:hidden"><span style="left:51px;letter-spacing:0.044px"><i class="fr" style="font-style:normal">buildStatementFromContext</i>:130, XMLMapperBuilder {org.apache.ibatis.builder.xml}</span></div>
<div class="row" style="top:141px;width:666.5px;overflow:hidden"><span style="left:51px;letter-spacing:0.042px"><i class="fr" style="font-style:normal">configurationElement</i>:120, XMLMapperBuilder {org.apache.ibatis.builder.xml}</span></div>
<div class="row" style="top:161px;width:666.5px;overflow:hidden"><span style="left:51px;letter-spacing:0.07px"><i class="fr" style="font-style:normal">parse</i>:94, XMLMapperBuilder {org.apache.ibatis.builder.xml}</span></div>
<div class="row" style="top:181px;width:666.5px;overflow:hidden"><span style="left:51px;letter-spacing:-0.002px"><i class="fr" style="font-style:normal">buildSqlSessionFactory</i>:591, MybatisSqlSessionFactoryBean {com.baomidou.mybatisplus.extension.spring}</span></div>
<div class="row" style="top:201px;width:666.5px;overflow:hidden"><span style="left:51px;letter-spacing:0.05px"><i class="fr" style="font-style:normal">afterPropertiesSet</i>:429, MybatisSqlSessionFactoryBean {com.baomidou.mybatisplus.extension.spring}</span></div>
<div class="row" style="top:221px;width:666.5px;overflow:hidden"><span style="left:51px;letter-spacing:0.047px"><i class="fr" style="font-style:normal">invokeInitMethods</i>:1837, AbstractAutowireCapableBeanFactory {org.springframework.beans.factory.support}</span></div>
</div>
<div class="abs" style="left:668px;top:59px;width:14px;height:239px;background:#4a4d4f"></div>
<div class="abs" style="left:671px;top:60.5px;width:9px;height:36px;border-radius:4.5px;background:#646667"></div>
<div class="abs" style="left:709px;top:59px;width:414px;height:239px;overflow:hidden">
<div class="row" style="top:1px"><span style="left:42px;letter-spacing:0.037px"><i class="fr" style="font-style:normal">this</i> = <i style="font-style:normal;color:#8c8c8c">{XMLStatementBuilder@15297}</i></span></div>
<div class="row" style="top:21px"><span style="left:42px;letter-spacing:0.265px"><i class="fr" style="font-style:normal">id</i> = <i style="font-style:normal;color:#6a8759">"getNotifyList"</i></span></div>
<div class="row" style="top:41px"><span style="left:42px;letter-spacing:0.089px"><i class="fr" style="font-style:normal">databaseId</i> = <i style="font-style:normal;color:#bbbbbb">null</i></span></div>
<div class="row" style="top:61px"><span style="left:42px;letter-spacing:0.115px"><i class="fr" style="font-style:normal">nodeName</i> = <i style="font-style:normal;color:#6a8759">"select"</i></span></div>
<div class="row" style="top:81px"><span style="left:42px;letter-spacing:-0.093px"><i class="fr" style="font-style:normal">sqlCommandType</i> = <i style="font-style:normal;color:#8c8c8c">{SqlCommandType@15299}</i> "SELECT"</span></div>
<div class="row" style="top:101px"><span style="left:42px;letter-spacing:0.137px"><i class="fr" style="font-style:normal">isSelect</i> = <i style="font-style:normal;color:#bbbbbb">true</i></span></div>
<div class="row" style="top:121px"><span style="left:42px;letter-spacing:0.082px"><i class="fr" style="font-style:normal">flushCache</i> = <i style="font-style:normal;color:#bbbbbb">false</i></span></div>
<div class="row" style="top:141px"><span style="left:42px;letter-spacing:0.056px"><i class="fr" style="font-style:normal">useCache</i> = <i style="font-style:normal;color:#bbbbbb">true</i></span></div>
<div class="row" style="top:161px"><span style="left:42px;letter-spacing:0.049px"><i class="fr" style="font-style:normal">resultOrdered</i> = <i style="font-style:normal;color:#bbbbbb">false</i></span></div>
<div class="row" style="top:181px"><span style="left:42px;letter-spacing:-0.049px"><i class="fr" style="font-style:normal">includeParser</i> = <i style="font-style:normal;color:#8c8c8c">{XMLIncludeTransformer@15300}</i></span></div>
<div class="row" style="top:201px"><span style="left:42px;letter-spacing:0.049px"><i class="fr" style="font-style:normal">parameterType</i> = <i style="font-style:normal;color:#6a8759">"map"</i></span></div>
<div class="row" style="top:221px"><span style="left:42px;letter-spacing:0.01px"><i class="fr" style="font-style:normal">parameterTypeClass</i> = <i style="font-style:normal;color:#8c8c8c">{Class@290}</i> "interface java.util.Map" <i style="font-style:normal;color:#589df6">... Navigate</i></span></div>
</div>
</div>
<svg style="left:542.5px;top:583.5px" width="13" height="11" viewBox="0 0 13 11"><rect x="0" y="0" width="13" height="11" fill="#afb1b3"/><path d="M4 2.2 L8.6 5.5 L4 8.8 Z" fill="#45494b"/></svg>
<svg style="left:712.5px;top:583.5px" width="13" height="11" viewBox="0 0 13 11"><rect x="0" y="0" width="13" height="11" fill="#afb1b3"/><path d="M4 2.2 L8.6 5.5 L4 8.8 Z" fill="#45494b"/></svg>
<svg style="left:680px;top:585px" width="8" height="8" viewBox="0 0 8 8"><path d="M0.4 0.4 L7.6 7.6 M7.6 0.4 L0.4 7.6" stroke="#7a7d7f" stroke-width="1" fill="none"/></svg>
<svg style="left:843px;top:585px" width="8" height="8" viewBox="0 0 8 8"><path d="M0.4 0.4 L7.6 7.6 M7.6 0.4 L0.4 7.6" stroke="#7a7d7f" stroke-width="1" fill="none"/></svg>
<svg style="left:868px;top:584px" width="12" height="11" viewBox="0 0 12 11"><path d="M0 1 H12 M0 10 H12" stroke="#afb1b3" stroke-width="2"/><path d="M0 5.5 H12" stroke="#3f9ad4" stroke-width="2.2"/></svg>
<div class="abs" style="left:890px;top:579px;width:1px;height:20px;background:#555759"></div>
<svg style="left:900px;top:581px" width="14" height="15" viewBox="0 0 14 15"><path d="M1 13 H13" stroke="#afb1b3" stroke-width="2"/><path d="M1.5 8.2 L5.8 3.6 L10 7.8" fill="none" stroke="#3f9ad4" stroke-width="1.8"/><path d="M13 4.2 V10 H7.2 Z" fill="#3f9ad4"/></svg>
<svg style="left:926px;top:581px" width="14" height="15" viewBox="0 0 14 15"><path d="M1 13 H13" stroke="#afb1b3" stroke-width="2"/><path d="M7 1 V7" stroke="#3f9ad4" stroke-width="2"/><path d="M2.8 5.6 H11.2 L7 10.4 Z" fill="#3f9ad4"/></svg>
<svg style="left:952px;top:581px" width="14" height="15" viewBox="0 0 14 15"><path d="M1 13 H13" stroke="#afb1b3" stroke-width="2"/><path d="M7 1 V7" stroke="#db5860" stroke-width="2"/><path d="M2.8 5.6 H11.2 L7 10.4 Z" fill="#db5860"/></svg>
<svg style="left:978px;top:581px" width="14" height="15" viewBox="0 0 14 15"><path d="M1 13 H13" stroke="#afb1b3" stroke-width="2"/><path d="M7 4.5 V10.6" stroke="#3f9ad4" stroke-width="2"/><path d="M2.8 5.8 H11.2 L7 1 Z" fill="#3f9ad4"/></svg>
<svg style="left:1004px;top:582px" width="14" height="14" viewBox="0 0 14 14"><path d="M1 1 L6.4 6.4 M6.4 1 L1 6.4" stroke="#db5860" stroke-width="1.9"/><path d="M8.6 5 H12.4 V11.6 H5 V8.4" fill="none" stroke="#afb1b3" stroke-width="1.9"/></svg>
<svg style="left:1029px;top:581px" width="17" height="16" viewBox="0 0 17 16"><path d="M1 1.5 L7 7.5" stroke="#3f9ad4" stroke-width="1.8"/><path d="M8.6 3.4 V9 H3 Z" fill="#3f9ad4"/><path d="M10.5 6.5 H12 M14 6.5 H15.5 M10.5 15.5 H12 M14 15.5 H15.5 M13 6.8 V15.2" stroke="#afb1b3" stroke-width="1.2"/></svg>
<div class="abs" style="left:1053px;top:579px;width:1px;height:20px;background:#555759"></div>
<svg style="left:1063px;top:582px" width="13" height="14" viewBox="0 0 13 14"><rect x="0.5" y="0.5" width="12" height="13" fill="#afb1b3"/><rect x="2" y="2" width="9" height="2.6" fill="#45494b"/><path d="M2 6.6 H4.4 V8.4 H2 Z M5.3 6.6 H7.7 V8.4 H5.3 Z M8.6 6.6 H11 V8.4 H8.6 Z M2 9.8 H4.4 V11.6 H2 Z M5.3 9.8 H7.7 V11.6 H5.3 Z M8.6 9.8 H11 V11.6 H8.6 Z" fill="#45494b"/></svg>
<svg style="left:1089px;top:583px" width="14" height="12" viewBox="0 0 14 12"><path d="M0 1.5 H5 M8 1.5 H14 M0 6 H3.5 M6.5 6 H14 M0 10.5 H5 M8 10.5 H14 M5 1.5 L7 6 L5 10.5" stroke="#5e6163" stroke-width="1.5" fill="none"/></svg>
<svg style="left:408px;top:619px" width="8" height="8" viewBox="0 0 8 8"><circle cx="4" cy="4" r="3.8" fill="#e8a92c"/><path d="M4 1.4 V5.4 M2.2 3.8 L4 5.8 L5.8 3.8" stroke="#5a3d00" stroke-width="1" fill="none"/></svg>
<svg style="left:403px;top:639px" width="10" height="8" viewBox="0 0 10 8"><path d="M1 1.5 L5 5.5 L9 1.5" fill="none" stroke="#c8d6f0" stroke-width="1.3"/></svg>
<svg style="left:421px;top:636px" width="16" height="14" viewBox="0 0 16 14"><path d="M2 7.5 L6 11.5 L14.5 2" fill="none" stroke="#e8735a" stroke-width="2.4"/></svg>
<svg style="left:1085px;top:640px" width="10" height="10" viewBox="0 0 10 10"><path d="M0 5 H10 M5 0 V10" stroke="#d0d2d4" stroke-width="1.8"/></svg>
<div class="abs" style="left:1085px;top:670px;width:10px;height:2px;background:#5e6163"></div>
<svg style="left:1084px;top:693px" width="12" height="7" viewBox="0 0 12 7"><path d="M0 7 L6 0.5 L12 7 Z" fill="#5e6163"/></svg>
<svg style="left:1084px;top:719px" width="12" height="7" viewBox="0 0 12 7"><path d="M0 0 L6 6.5 L12 0 Z" fill="#5e6163"/></svg>
<svg style="left:1084px;top:742px" width="13" height="13" viewBox="0 0 13 13"><path d="M0.5 0.5 H8.5 V2 H2 V9.5 H0.5 Z" fill="#63676a"/><rect x="3.5" y="3.5" width="9" height="9" fill="#63676a"/><path d="M5.2 6 H10.8 M5.2 8 H10.8 M5.2 10 H10.8" stroke="#45494b" stroke-width="0.9"/></svg>
<div class="abs" style="left:1079px;top:764px;width:22px;height:22px;border-radius:3px;background:#5c6164"></div>
<svg style="left:1082px;top:770px" width="16" height="9" viewBox="0 0 16 9"><ellipse cx="4.2" cy="5" rx="3.2" ry="2.9" fill="none" stroke="#d4d6d8" stroke-width="1.6"/><ellipse cx="11.8" cy="5" rx="3.2" ry="2.9" fill="none" stroke="#d4d6d8" stroke-width="1.6"/><path d="M7 4 Q8 3.2 9 4 M1 4.4 L0.4 3 M15 4.4 L15.6 3" fill="none" stroke="#d4d6d8" stroke-width="1.3"/></svg>
<svg style="left:1110px;top:638px" width="8" height="10" viewBox="0 0 8 10"><path d="M1.5 1 L5.5 5 L1.5 9" fill="none" stroke="#afb1b3" stroke-width="1.3"/></svg>
<svg style="left:1129px;top:637.2px" width="11" height="11" viewBox="0 0 11 11"><path d="M0 1.2 H11 M0 4.1 H11 M0 7 H11 M0 9.9 H11" stroke="#caa03c" stroke-width="1.7"/></svg>
<svg style="left:1110px;top:658px" width="8" height="10" viewBox="0 0 8 10"><path d="M1.5 1 L5.5 5 L1.5 9" fill="none" stroke="#afb1b3" stroke-width="1.3"/></svg>
<svg style="left:1129px;top:657.2px" width="11" height="11" viewBox="0 0 11 11"><path d="M0 1.2 H11 M0 4.1 H11 M0 7 H11 M0 9.9 H11" stroke="#caa03c" stroke-width="1.7"/></svg>
<svg style="left:1129px;top:677.2px" width="11" height="11" viewBox="0 0 11 11"><path d="M0 1.2 H11 M0 4.1 H11 M0 7 H11 M0 9.9 H11" stroke="#caa03c" stroke-width="1.7"/></svg>
<svg style="left:1110px;top:698px" width="8" height="10" viewBox="0 0 8 10"><path d="M1.5 1 L5.5 5 L1.5 9" fill="none" stroke="#afb1b3" stroke-width="1.3"/></svg>
<svg style="left:1129px;top:697.2px" width="11" height="11" viewBox="0 0 11 11"><path d="M0 1.2 H11 M0 4.1 H11 M0 7 H11 M0 9.9 H11" stroke="#caa03c" stroke-width="1.7"/></svg>
<svg style="left:1110px;top:718px" width="8" height="10" viewBox="0 0 8 10"><path d="M1.5 1 L5.5 5 L1.5 9" fill="none" stroke="#afb1b3" stroke-width="1.3"/></svg>
<svg style="left:1127.5px;top:716px" width="14" height="14" viewBox="0 0 14 14"><circle cx="7" cy="7" r="6.8" fill="#3e98b9"/><text x="7" y="10" text-anchor="middle" font-family="Liberation Sans,sans-serif" font-weight="bold" font-size="8" fill="#1e3a46">E</text></svg>
<svg style="left:1128.5px;top:737px" width="12" height="12" viewBox="0 0 12 12"><rect width="12" height="12" fill="#3d9ab8"/><text x="6" y="8.8" text-anchor="middle" font-family="Liberation Sans,sans-serif" font-weight="bold" font-size="7.5" fill="#1e3a46">01</text></svg>
<svg style="left:1128.5px;top:757px" width="12" height="12" viewBox="0 0 12 12"><rect width="12" height="12" fill="#3d9ab8"/><text x="6" y="8.8" text-anchor="middle" font-family="Liberation Sans,sans-serif" font-weight="bold" font-size="7.5" fill="#1e3a46">01</text></svg>
<svg style="left:1128.5px;top:777px" width="12" height="12" viewBox="0 0 12 12"><rect width="12" height="12" fill="#3d9ab8"/><text x="6" y="8.8" text-anchor="middle" font-family="Liberation Sans,sans-serif" font-weight="bold" font-size="7.5" fill="#1e3a46">01</text></svg>
<svg style="left:1128.5px;top:797px" width="12" height="12" viewBox="0 0 12 12"><rect width="12" height="12" fill="#3d9ab8"/><text x="6" y="8.8" text-anchor="middle" font-family="Liberation Sans,sans-serif" font-weight="bold" font-size="7.5" fill="#1e3a46">01</text></svg>
<svg style="left:1110px;top:818px" width="8" height="10" viewBox="0 0 8 10"><path d="M1.5 1 L5.5 5 L1.5 9" fill="none" stroke="#afb1b3" stroke-width="1.3"/></svg>
<svg style="left:1129px;top:817.2px" width="11" height="11" viewBox="0 0 11 11"><path d="M0 1.2 H11 M0 4.1 H11 M0 7 H11 M0 9.9 H11" stroke="#caa03c" stroke-width="1.7"/></svg>
<svg style="left:1110px;top:838px" width="8" height="10" viewBox="0 0 8 10"><path d="M1.5 1 L5.5 5 L1.5 9" fill="none" stroke="#afb1b3" stroke-width="1.3"/></svg>
<svg style="left:1129px;top:837.2px" width="11" height="11" viewBox="0 0 11 11"><path d="M0 1.2 H11 M0 4.1 H11 M0 7 H11 M0 9.9 H11" stroke="#caa03c" stroke-width="1.7"/></svg>
<svg style="left:1110px;top:858px" width="8" height="10" viewBox="0 0 8 10"><path d="M1.5 1 L5.5 5 L1.5 9" fill="none" stroke="#afb1b3" stroke-width="1.3"/></svg>
<svg style="left:1129px;top:857.2px" width="11" height="11" viewBox="0 0 11 11"><path d="M0 1.2 H11 M0 4.1 H11 M0 7 H11 M0 9.9 H11" stroke="#caa03c" stroke-width="1.7"/></svg>
<div class="red" style="left:655px;top:28px;width:189px;height:46px"></div>
<div class="red" style="left:101px;top:339px;width:709px;height:104px"></div>
<div class="red" style="left:422px;top:707px;width:511px;height:35px"></div>
<div id="edge" class="abs"></div>
</body></html>
